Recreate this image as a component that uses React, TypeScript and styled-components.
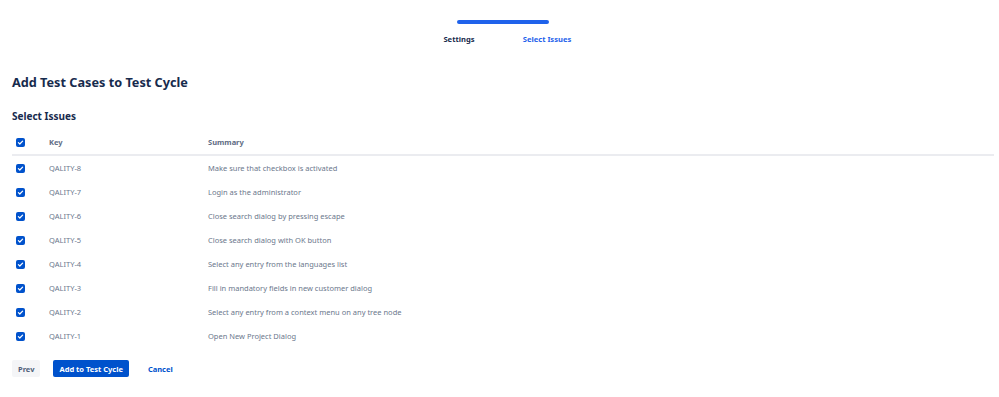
import React from "react";
import styled, { createGlobalStyle } from "styled-components";

const Global = createGlobalStyle`
  html, body { margin: 0; padding: 0; background: #fff; }
  body { font-family: "Noto Sans", "Open Sans", sans-serif; color: #172b4d; }
  * { box-sizing: border-box; }
`;

const Page = styled.div`
  padding: 0 5px 0 12px;
`;

const Stepper = styled.div`
  display: grid;
  grid-template-columns: 88px 88px;
  justify-content: center;
  padding-top: 20px;
`;

const StepBar = styled.div`
  grid-column: 1 / span 2;
  height: 4px;
  margin: 0 42px;
  border-radius: 2px;
  background: #1f62eb;
`;

const StepLabel = styled.div<{ $active?: boolean }>`
  margin-top: 10px;
  text-align: center;
  font-size: 7.6px;
  font-weight: 700;
  line-height: 11px;
  color: ${(p) => (p.$active ? "#1f62eb" : "#172b4d")};
`;

const Title = styled.h1`
  margin: 28px 0 0;
  font-size: 12.7px;
  line-height: 18px;
  font-weight: 700;
  color: #172b4d;
`;

const Subtitle = styled.h2`
  margin: 18px 0 0;
  font-size: 10px;
  line-height: 14px;
  font-weight: 700;
  color: #172b4d;
`;

const Table = styled.div`
  margin-top: 7px;
`;

const Row = styled.div<{ $head?: boolean }>`
  display: grid;
  grid-template-columns: 37px 159px 1fr;
  align-items: center;
  height: ${(p) => (p.$head ? "26px" : "24px")};
  border-bottom: ${(p) => (p.$head ? "2px solid #ebecf0" : "none")};
  font-size: 7.5px;
  font-weight: ${(p) => (p.$head ? 700 : 400)};
  color: ${(p) => (p.$head ? "#5e6c84" : "#6b778c")};
`;

const CheckCell = styled.div`
  display: flex;
  align-items: center;
  padding-left: 4px;
`;

const Box = styled.span`
  width: 9px;
  height: 9px;
  border-radius: 2px;
  background: #0052cc;
  display: flex;
  align-items: center;
  justify-content: center;
`;

const Cell = styled.div`
  white-space: nowrap;
`;

const Actions = styled.div`
  display: flex;
  gap: 13px;
  margin-top: 12px;
`;

const Button = styled.button<{ $variant: "default" | "primary" | "link" }>`
  height: 17px;
  padding: 0 6px;
  border: none;
  border-radius: 2px;
  font-family: inherit;
  font-size: 7.5px;
  font-weight: 700;
  cursor: pointer;
  background: ${(p) =>
    p.$variant === "primary" ? "#0052cc" : p.$variant === "default" ? "#f4f5f7" : "transparent"};
  color: ${(p) =>
    p.$variant === "primary" ? "#fff" : p.$variant === "default" ? "#505f79" : "#0052cc"};
`;

const Check = () => (
  <Box>
    <svg width="7" height="7" viewBox="0 0 8 8">
      <path d="M1.6 4.2 L3.2 5.7 L6.4 2.4" fill="none" stroke="#fff" strokeWidth="1.4" strokeLinecap="round" strokeLinejoin="round" />
    </svg>
  </Box>
);

const issues = [
  ["QALITY-8", "Make sure that checkbox is activated"],
  ["QALITY-7", "Login as the administrator"],
  ["QALITY-6", "Close search dialog by pressing escape"],
  ["QALITY-5", "Close search dialog with OK button"],
  ["QALITY-4", "Select any entry from the languages list"],
  ["QALITY-3", "Fill in mandatory fields in new customer dialog"],
  ["QALITY-2", "Select any entry from a context menu on any tree node"],
  ["QALITY-1", "Open New Project Dialog"],
];

export default function App() {
  return (
    <Page>
      <Global />
      <Stepper>
        <StepBar />
        <StepLabel>Settings</StepLabel>
        <StepLabel $active>Select Issues</StepLabel>
      </Stepper>
      <Title>Add Test Cases to Test Cycle</Title>
      <Subtitle>Select Issues</Subtitle>
      <Table>
        <Row $head>
          <CheckCell><Check /></CheckCell>
          <Cell>Key</Cell>
          <Cell>Summary</Cell>
        </Row>
        {issues.map(([k, s]) => (
          <Row key={k}>
            <CheckCell><Check /></CheckCell>
            <Cell>{k}</Cell>
            <Cell>{s}</Cell>
          </Row>
        ))}
      </Table>
      <Actions>
        <Button $variant="default">Prev</Button>
        <Button $variant="primary">Add to Test Cycle</Button>
        <Button $variant="link">Cancel</Button>
      </Actions>
    </Page>
  );
}
